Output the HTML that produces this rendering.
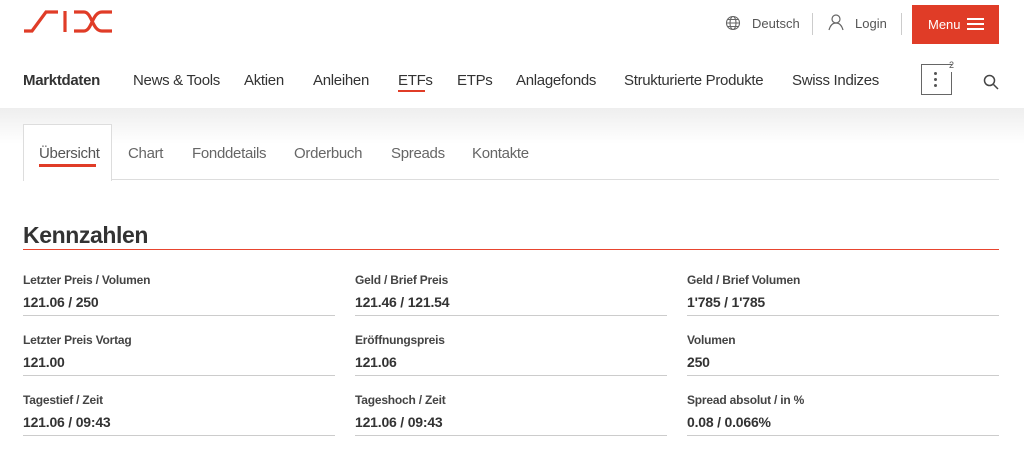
<!DOCTYPE html>
<html><head><meta charset="utf-8"><style>
*{margin:0;padding:0;box-sizing:border-box}
body{width:1024px;height:456px;overflow:hidden;background:#fff;font-family:"Liberation Sans",sans-serif;color:#333;position:relative}
.a{position:absolute;white-space:nowrap}
.nav{top:72px;font-size:15px;color:#333;letter-spacing:-0.3px}
.tab{top:145px;font-size:15px;color:#666;letter-spacing:-0.3px}
.lbl{font-size:12px;font-weight:bold;color:#444;letter-spacing:-0.2px}
.val{font-size:14px;font-weight:bold;color:#333;letter-spacing:-0.2px}
.ln{position:absolute;height:1px;background:#ccc;width:312px}
</style></head><body>
<svg class="a" style="left:22px;top:8px" width="92" height="26" viewBox="0 0 92 26">
<path d="M2 23 H10 L24 4 H36" fill="none" stroke="#e03c27" stroke-width="3.2"/>
<path d="M43 3 V24" stroke="#e03c27" stroke-width="3.2"/>
<path d="M52 4 H62 C70 4 70 23 80 23 H90 M52 23 H62 C70 23 70 4 80 4 H90" fill="none" stroke="#e03c27" stroke-width="3.2"/>
</svg>
<svg class="a" style="left:725px;top:15px" width="16" height="16" viewBox="0 0 16 16" fill="none" stroke="#666" stroke-width="1.1"><circle cx="8" cy="8" r="6.5"/><ellipse cx="8" cy="8" rx="3" ry="6.5"/><path d="M1.5 8h13M2.5 4.5h11M2.5 11.5h11"/></svg>
<div class="a" style="left:752px;top:16px;font-size:13px;color:#555">Deutsch</div>
<div class="a" style="left:812px;top:13px;width:1px;height:22px;background:#ccc"></div>
<svg class="a" style="left:828px;top:13px" width="16" height="18" viewBox="0 0 16 18" fill="none" stroke="#666" stroke-width="1.2"><circle cx="8" cy="6" r="4"/><path d="M1 17 Q3 10 8 10 Q13 10 15 17"/></svg>
<div class="a" style="left:855px;top:16px;font-size:13px;color:#555">Login</div>
<div class="a" style="left:901px;top:13px;width:1px;height:22px;background:#ccc"></div>
<div class="a" style="left:912px;top:5px;width:87px;height:39px;background:#e03c27;color:#fff;font-size:13px;padding:12px 0 0 16px">Menu</div>
<div class="a" style="left:967px;top:18px;width:17px;height:2px;background:#fff;box-shadow:0 5px 0 #fff,0 10px 0 #fff"></div>
<div class="a nav" style="left:23px;font-weight:bold">Marktdaten</div>
<div class="a nav" style="left:133px">News &amp; Tools</div>
<div class="a nav" style="left:244px">Aktien</div>
<div class="a nav" style="left:313px">Anleihen</div>
<div class="a nav" style="left:398px">ETFs</div>
<div class="a" style="left:398px;top:90px;width:27px;height:2px;background:#e03c27"></div>
<div class="a nav" style="left:457px">ETPs</div>
<div class="a nav" style="left:516px">Anlagefonds</div>
<div class="a nav" style="left:624px">Strukturierte Produkte</div>
<div class="a nav" style="left:792px">Swiss Indizes</div>
<div class="a" style="left:921px;top:64px;width:31px;height:31px;border:1px solid #666;border-right:none"></div>
<div class="a" style="left:951px;top:72px;width:1px;height:23px;background:#666"></div>
<div class="a" style="left:934px;top:72px;width:3px;height:3px;border-radius:50%;background:#555;box-shadow:0 6px 0 #555,0 12px 0 #555"></div>
<div class="a" style="left:949px;top:60px;font-size:9px;color:#555">2</div>
<svg class="a" style="left:983px;top:74px" width="17" height="17" viewBox="0 0 17 17" fill="none" stroke="#444" stroke-width="1.5"><circle cx="6.5" cy="6.5" r="5"/><path d="M10.5 10.5 L15 15"/></svg>
<div class="a" style="left:0;top:108px;width:1024px;height:36px;background:linear-gradient(#eee,#fff)"></div>
<div class="a" style="left:23px;top:124px;width:89px;height:57px;background:#fff;border:1px solid #ddd;border-bottom:none"></div>
<div class="a" style="left:112px;top:179px;width:887px;height:1px;background:#ddd"></div>
<div class="a tab" style="left:39px;color:#555">Übersicht</div>
<div class="a" style="left:39px;top:164px;width:57px;height:3px;background:#e03c27"></div>
<div class="a tab" style="left:128px">Chart</div>
<div class="a tab" style="left:192px">Fonddetails</div>
<div class="a tab" style="left:294px">Orderbuch</div>
<div class="a tab" style="left:391px">Spreads</div>
<div class="a tab" style="left:472px">Kontakte</div>
<div class="a" style="left:23px;top:222px;font-size:23px;font-weight:bold;color:#333;letter-spacing:-0.4px">Kennzahlen</div>
<div class="a" style="left:23px;top:249px;width:976px;height:1px;background:#e8452f"></div>

<div class="a lbl" style="left:23px;top:273px">Letzter Preis / Volumen</div>
<div class="a val" style="left:23px;top:294px">121.06 / 250</div>
<div class="ln" style="left:23px;top:315px"></div>
<div class="a lbl" style="left:355px;top:273px">Geld / Brief Preis</div>
<div class="a val" style="left:355px;top:294px">121.46 / 121.54</div>
<div class="ln" style="left:355px;top:315px"></div>
<div class="a lbl" style="left:687px;top:273px">Geld / Brief Volumen</div>
<div class="a val" style="left:687px;top:294px">1'785 / 1'785</div>
<div class="ln" style="left:687px;top:315px"></div>

<div class="a lbl" style="left:23px;top:333px">Letzter Preis Vortag</div>
<div class="a val" style="left:23px;top:354px">121.00</div>
<div class="ln" style="left:23px;top:375px"></div>
<div class="a lbl" style="left:355px;top:333px">Eröffnungspreis</div>
<div class="a val" style="left:355px;top:354px">121.06</div>
<div class="ln" style="left:355px;top:375px"></div>
<div class="a lbl" style="left:687px;top:333px">Volumen</div>
<div class="a val" style="left:687px;top:354px">250</div>
<div class="ln" style="left:687px;top:375px"></div>

<div class="a lbl" style="left:23px;top:393px">Tagestief / Zeit</div>
<div class="a val" style="left:23px;top:414px">121.06 / 09:43</div>
<div class="ln" style="left:23px;top:435px"></div>
<div class="a lbl" style="left:355px;top:393px">Tageshoch / Zeit</div>
<div class="a val" style="left:355px;top:414px">121.06 / 09:43</div>
<div class="ln" style="left:355px;top:435px"></div>
<div class="a lbl" style="left:687px;top:393px">Spread absolut / in %</div>
<div class="a val" style="left:687px;top:414px">0.08 / 0.066%</div>
<div class="ln" style="left:687px;top:435px"></div>
</body></html>
